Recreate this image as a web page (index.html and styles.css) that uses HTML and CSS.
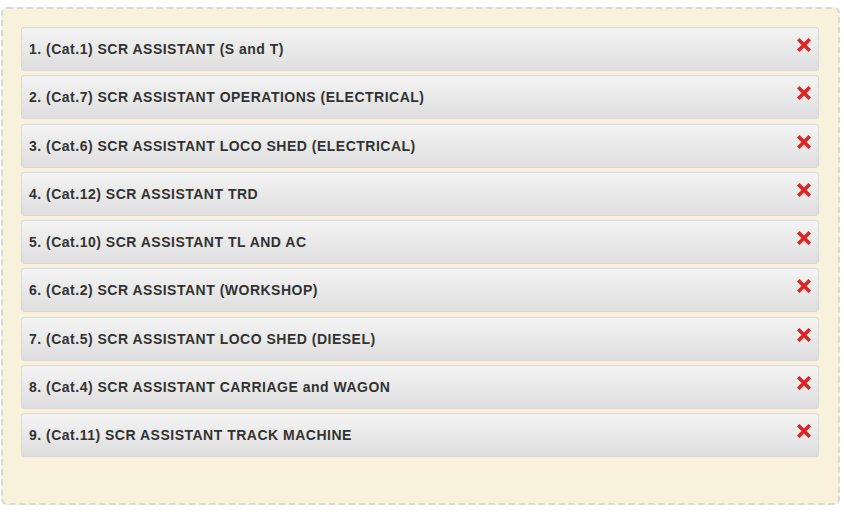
FILE: index.html
```html
<!DOCTYPE html>
<html>
<head>
<meta charset="utf-8">
<link rel="stylesheet" href="styles.css">
</head>
<body>
<div class="box">
  <ul class="list">
    <li class="item"><span class="label">1. (Cat.1) SCR ASSISTANT (S and T)</span><svg class="del" viewBox="0 0 14 14"><path d="M2.5 2.5L11.5 11.5M11.5 2.5L2.5 11.5"/></svg></li>
    <li class="item"><span class="label">2. (Cat.7) SCR ASSISTANT OPERATIONS (ELECTRICAL)</span><svg class="del" viewBox="0 0 14 14"><path d="M2.5 2.5L11.5 11.5M11.5 2.5L2.5 11.5"/></svg></li>
    <li class="item"><span class="label">3. (Cat.6) SCR ASSISTANT LOCO SHED (ELECTRICAL)</span><svg class="del" viewBox="0 0 14 14"><path d="M2.5 2.5L11.5 11.5M11.5 2.5L2.5 11.5"/></svg></li>
    <li class="item"><span class="label">4. (Cat.12) SCR ASSISTANT TRD</span><svg class="del" viewBox="0 0 14 14"><path d="M2.5 2.5L11.5 11.5M11.5 2.5L2.5 11.5"/></svg></li>
    <li class="item"><span class="label">5. (Cat.10) SCR ASSISTANT TL AND AC</span><svg class="del" viewBox="0 0 14 14"><path d="M2.5 2.5L11.5 11.5M11.5 2.5L2.5 11.5"/></svg></li>
    <li class="item"><span class="label">6. (Cat.2) SCR ASSISTANT (WORKSHOP)</span><svg class="del" viewBox="0 0 14 14"><path d="M2.5 2.5L11.5 11.5M11.5 2.5L2.5 11.5"/></svg></li>
    <li class="item"><span class="label">7. (Cat.5) SCR ASSISTANT LOCO SHED (DIESEL)</span><svg class="del" viewBox="0 0 14 14"><path d="M2.5 2.5L11.5 11.5M11.5 2.5L2.5 11.5"/></svg></li>
    <li class="item"><span class="label">8. (Cat.4) SCR ASSISTANT CARRIAGE and WAGON</span><svg class="del" viewBox="0 0 14 14"><path d="M2.5 2.5L11.5 11.5M11.5 2.5L2.5 11.5"/></svg></li>
    <li class="item"><span class="label">9. (Cat.11) SCR ASSISTANT TRACK MACHINE</span><svg class="del" viewBox="0 0 14 14"><path d="M2.5 2.5L11.5 11.5M11.5 2.5L2.5 11.5"/></svg></li>
  </ul>
</div>
</body>
</html>
```
FILE: styles.css
```css
html, body {
  margin: 0;
  padding: 0;
  background: #ffffff;
}
body {
  padding: 7px 4px 0 1px;
  font-family: "Liberation Sans", Arial, sans-serif;
}
.box {
  background: #f8f2dc;
  border: 2px dashed #d8d8d8;
  border-radius: 6px;
  padding: 18px 19px 47px 18px;
  height: 498px;
  box-sizing: border-box;
}
.list {
  list-style: none;
  margin: 0;
  padding: 0;
  display: flex;
  flex-direction: column;
  gap: 4.25px;
}
.item {
  height: 44px;
  box-sizing: border-box;
  border: 1px solid #d8d8d8;
  border-radius: 3px;
  background: linear-gradient(to bottom, #f4f4f4 0%, #dedede 100%);
  display: flex;
  align-items: center;
  justify-content: space-between;
  padding: 0 7px 0 7px;
}
.label {
  font-size: 14px;
  font-weight: bold;
  color: #333333;
  letter-spacing: 0.5px;
}
.del {
  width: 14px;
  height: 14px;
  align-self: flex-start;
  margin-top: 10px;
}
.del path {
  stroke: #e02426;
  stroke-width: 3.6;
  stroke-linecap: square;
  fill: none;
}
```
